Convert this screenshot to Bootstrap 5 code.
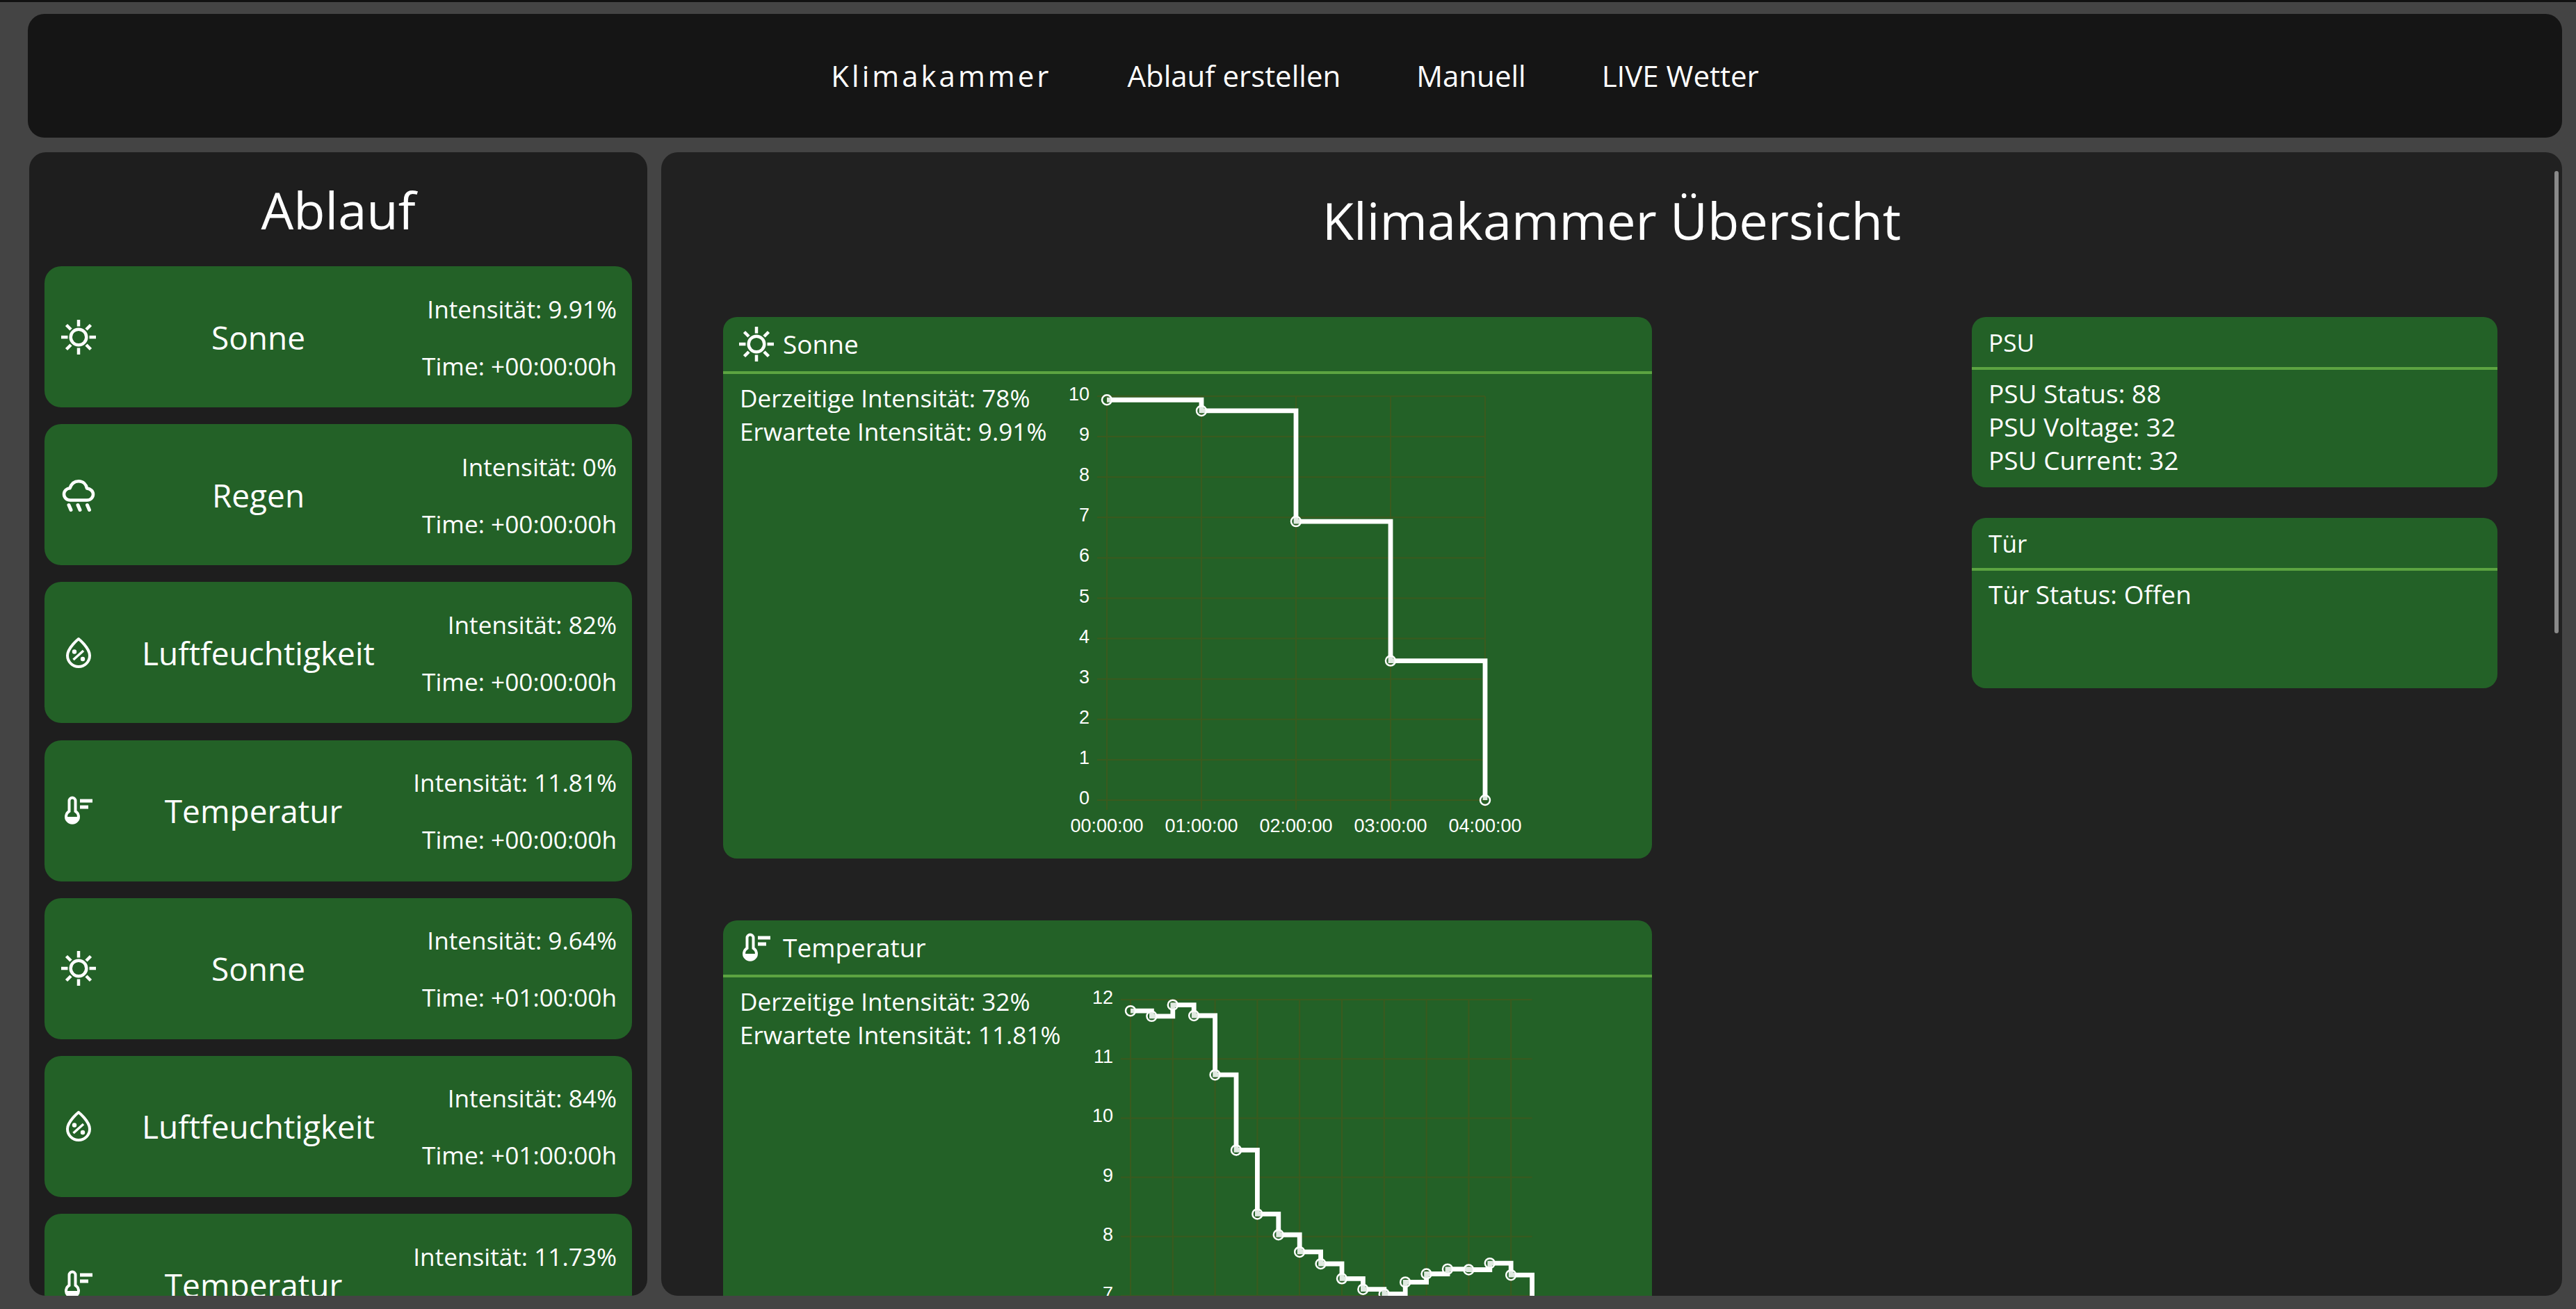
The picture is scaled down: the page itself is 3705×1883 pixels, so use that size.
<!DOCTYPE html>
<html lang="de">
<head>
    <meta charset="UTF-8">
    <title>Klimakammer</title>
    <link href="https://cdn.jsdelivr.net/npm/bootstrap@5.3.0/dist/css/bootstrap.min.css" rel="stylesheet">
    <style>
        html, body { height: 100%; }
        body {
            background: #444444;
            color: #fff;
            font-family: "Open Sans", sans-serif;
            font-size: 35.2px;
            line-height: 48px;
            border-top: 3px solid #111;
            padding: 17px 20px 19px 40px;
            overflow: hidden;
        }
        .klima-top {
            background: #151515;
            border-radius: 24px;
            height: 178px;
            flex-shrink: 0;
            margin-bottom: 21px;
        }
        .klima-top .nav { gap: 109px; font-size: 42px; }
        .klima-top .nav-link { color: #fff; padding: 0; }
        .klima-top .nav-link.active { letter-spacing: 4px; }
        .klima-side {
            background: #1e1e1e;
            border-radius: 24px;
            width: 889px;
            margin-left: 2px;
            margin-right: 20px;
            padding: 0 22px;
            overflow: hidden;
            flex-shrink: 0;
        }
        .klima-side h2 {
            font-size: 74px;
            line-height: 86px;
            font-weight: 400;
            text-align: center;
            margin: 40px 0 38px;
        }
        .seq-item {
            background: #236127;
            border-radius: 24px;
            height: 203px;
            margin-bottom: 24.2px;
            padding-left: 25px;
        }
        .seq-name { font-size: 46px; margin-left: 19px; }
        .seq-temp .seq-name { padding-right: 14px; }
        .seq-info { width: 322px; padding-right: 22px; gap: 34px; white-space: nowrap; }
        .klima-main-wrap { position: relative; overflow: hidden; border-radius: 24px; background: #212121; }
        .scroll-thumb {
            position: absolute;
            top: 27px;
            right: 5px;
            width: 6px;
            height: 665px;
            background: #8a8a8a;
            border-radius: 3px;
        }
        .klima-content { padding: 52px 93px 0 89px; }
        .klima-content h1 {
            font-size: 74px;
            line-height: 91px;
            font-weight: 400;
            text-align: center;
            margin: 0 -4px 94px 0;
        }
        .charts-col { width: 1336px; }
        .status-col { width: 756px; }
        .klima-card {
            background: #236127;
            color: #fff;
            border: 0;
            border-radius: 20px;
            overflow: hidden;
        }
        .klima-card .card-header {
            background: transparent;
            border-radius: 0;
            border-bottom: 4px solid #5ca441;
            padding: 0 24px;
            display: flex;
            align-items: center;
            gap: 14px;
        }
        .klima-card .card-body { padding: 10px 24px 0; }
        .chart-card { height: 779px; margin-bottom: 89px; }
        .chart-card .card-header { height: 82px; font-size: 37px; }
        .chart-card svg.chart-svg { margin-left: -2px; flex-shrink: 0; }
        .chart-text { white-space: nowrap; }
        .status-card { height: 245px; margin-bottom: 44px; }
        .status-card .card-header { height: 76px; }
        .status-card .card-body { font-size: 37px; }
        .klima-icon { flex-shrink: 0; fill: none; stroke: #fff; stroke-width: 4.5; }
    </style>
</head>
<body class="d-flex flex-column">
    <!-- Navigation -->
    <nav class="klima-top d-flex align-items-center justify-content-center">
        <ul class="nav">
            <li class="nav-item"><a class="nav-link active" href="#">Klimakammer</a></li>
            <li class="nav-item"><a class="nav-link" href="#">Ablauf erstellen</a></li>
            <li class="nav-item"><a class="nav-link" href="#">Manuell</a></li>
            <li class="nav-item"><a class="nav-link" href="#">LIVE Wetter</a></li>
        </ul>
    </nav>

    <div class="d-flex flex-grow-1 overflow-hidden">
        <!-- Ablauf -->
        <aside class="klima-side">
            <h2>Ablauf</h2>
            <div id="seqList"></div>
        </aside>

        <!-- Übersicht -->
        <main class="klima-main-wrap flex-grow-1">
            <div class="klima-content">
                <h1>Klimakammer Übersicht</h1>
                <div class="d-flex justify-content-between align-items-start">
                    <div class="charts-col" id="chartsCol"></div>
                    <div class="status-col">
                        <div class="card klima-card status-card">
                            <div class="card-header">PSU</div>
                            <div class="card-body">
                                <div>PSU Status: 88</div>
                                <div>PSU Voltage: 32</div>
                                <div>PSU Current: 32</div>
                            </div>
                        </div>
                        <div class="card klima-card status-card">
                            <div class="card-header">Tür</div>
                            <div class="card-body">
                                <div>Tür Status: Offen</div>
                            </div>
                        </div>
                    </div>
                </div>
            </div>
            <div class="scroll-thumb"></div>
        </main>
    </div>

    <script src="https://cdn.jsdelivr.net/npm/bootstrap@5.3.0/dist/js/bootstrap.bundle.min.js"></script>
    <script>
        // Icons, drawn on a 48px box
        const icons = {
            sun: '<circle cx="24" cy="24" r="11.3"/><path d="M24 -1V8.5M24 39.5V49M-1 24H8.5M39.5 24H49M6.5 6.5L13 13M41.5 6.5L35 13M6.5 41.5L13 35M41.5 41.5L35 35"/>',
            rain: '<path stroke-linejoin="round" d="M12 31.5C6.5 31.5 3 27.5 3 22.8 3 18 7 14.5 11.5 14.3 13.5 8 18 4.2 24 4.2 31 4.2 35 9 36 14.5 41 15 45 18.5 45 23 45 27.8 41 31.5 36 31.5Z"/><path stroke-linecap="round" stroke-width="5" d="M10 38.5L13 45.5M23 38.5L26 45.5M36.5 38.5L39.5 45.5"/>',
            drop: '<path stroke-linejoin="round" stroke-width="4" d="M24 4C24 4 8 17 8 28A16 16 0 0 0 40 28C40 17 24 4 24 4Z"/><path stroke-width="3.5" d="M16.5 34L31 21"/><circle cx="18" cy="22.5" r="3.2" fill="#fff" stroke="none"/><circle cx="30" cy="33" r="3.2" fill="#fff" stroke="none"/>',
            temp: '<path stroke-width="4" d="M10.5 25V10A4.5 4.5 0 0 1 19.5 10V25A9 9 0 1 1 10.5 25Z"/><path fill="#fff" stroke="none" d="M6 33H24A9 9 0 0 1 6 33Z"/><path fill="#fff" stroke="none" d="M26 7.5H44V12.5H26ZM26 16.5H38V21.5H26Z"/>'
        };

        function iconSvg(name) {
            return `<svg class="klima-icon" width="48" height="48" viewBox="0 0 48 48" overflow="visible">${icons[name]}</svg>`;
        }

        // Sequence on the left
        const sequence = [
            { icon: 'sun', name: 'Sonne', value: '9.91%', time: '+00:00:00h' },
            { icon: 'rain', name: 'Regen', value: '0%', time: '+00:00:00h' },
            { icon: 'drop', name: 'Luftfeuchtigkeit', value: '82%', time: '+00:00:00h' },
            { icon: 'temp', name: 'Temperatur', value: '11.81%', time: '+00:00:00h' },
            { icon: 'sun', name: 'Sonne', value: '9.64%', time: '+01:00:00h' },
            { icon: 'drop', name: 'Luftfeuchtigkeit', value: '84%', time: '+01:00:00h' },
            { icon: 'temp', name: 'Temperatur', value: '11.73%', time: '+01:00:00h' }
        ];

        document.getElementById('seqList').innerHTML = sequence.map(s => `
            <div class="seq-item seq-${s.icon} d-flex align-items-center">
                ${iconSvg(s.icon)}
                <div class="seq-name flex-grow-1 text-center">${s.name}</div>
                <div class="seq-info d-flex flex-column align-items-end">
                    <div>Intensität: ${s.value}</div>
                    <div>Time: ${s.time}</div>
                </div>
            </div>`).join('');

        // Step chart, coordinates in svg pixels
        function stepChart(c) {
            const xAt = i => c.x0 + c.dx * i;
            const yAt = v => c.y0 + (c.top - v) * c.unit;
            let grid = '';
            let labels = '';
            for (let v = c.top; v >= c.bottom; v--) {
                grid += `<line x1="${c.x0 - 14}" x2="${xAt(c.count - 1)}" y1="${yAt(v)}" y2="${yAt(v)}"/>`;
                labels += `<text x="${c.x0 - 25}" y="${yAt(v) - 3}" text-anchor="end" dominant-baseline="central">${v}</text>`;
            }
            for (let i = 0; i < c.count; i += c.gridEvery) {
                grid += `<line x1="${xAt(i)}" x2="${xAt(i)}" y1="${c.y0}" y2="${yAt(c.bottom) + 14}"/>`;
                if (c.timeLabels) {
                    labels += `<text x="${xAt(i)}" y="${yAt(c.bottom) + 37}" text-anchor="middle" dominant-baseline="central">${c.timeLabels[i / c.gridEvery]}</text>`;
                }
            }
            let path = `M${xAt(0)} ${yAt(c.points[0])}`;
            c.points.forEach((v, i) => {
                if (i > 0) path += `H${xAt(i)}V${yAt(v)}`;
            });
            const dots = c.points.map((v, i) =>
                `<circle cx="${xAt(i)}" cy="${yAt(v)}" r="7" fill="rgba(35,97,39,.14)" stroke="#fff" stroke-width="2.5"/>`).join('');
            return `<svg class="chart-svg" width="${c.w}" height="${c.h}" viewBox="0 0 ${c.w} ${c.h}">
                <g stroke="#3a5a1e" stroke-width="2">${grid}</g>
                <g fill="#fff" font-family="'Liberation Sans', sans-serif" font-size="27">${labels}</g>
                <path d="${path}" fill="none" stroke="#fff" stroke-width="6.8"/>
                ${dots}
            </svg>`;
        }

        const charts = [
            {
                icon: 'sun', title: 'Sonne', current: '78%', expected: '9.91%',
                chart: {
                    w: 680, h: 690, x0: 64, dx: 136, y0: 32, unit: 58.1, top: 10, bottom: 0, count: 5, gridEvery: 1,
                    points: [9.91, 9.64, 6.9, 3.45, 0],
                    timeLabels: ['00:00:00', '01:00:00', '02:00:00', '03:00:00', '04:00:00']
                }
            },
            {
                icon: 'temp', title: 'Temperatur', current: '32%', expected: '11.81%',
                chart: {
                    w: 700, h: 690, x0: 78, dx: 30.4, y0: 32, unit: 85.2, top: 12, bottom: 6, count: 20, gridEvery: 2,
                    points: [11.81, 11.72, 11.91, 11.73, 10.73, 9.46, 8.38, 8.03, 7.74, 7.54, 7.29, 7.11, 7.03, 7.23, 7.37, 7.45, 7.44, 7.55, 7.35, 6]
                }
            }
        ];

        document.getElementById('chartsCol').innerHTML = charts.map(c => `
            <div class="card klima-card chart-card">
                <div class="card-header">${iconSvg(c.icon)}<span>${c.title}</span></div>
                <div class="d-flex align-items-start">
                    <div class="chart-text card-body flex-grow-0">
                        <div>Derzeitige Intensität: ${c.current}</div>
                        <div>Erwartete Intensität: ${c.expected}</div>
                    </div>
                    ${stepChart(c.chart)}
                </div>
            </div>`).join('');
    </script>
</body>
</html>
